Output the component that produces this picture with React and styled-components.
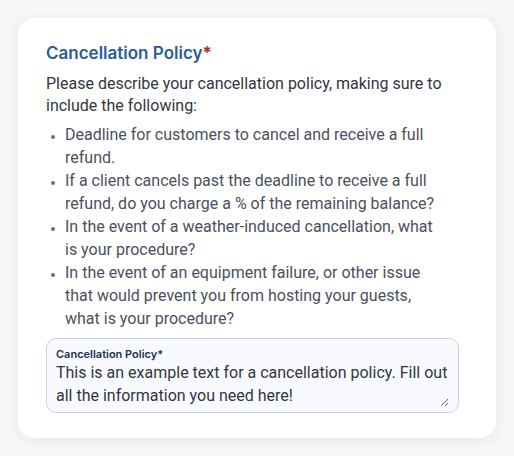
import styled, { createGlobalStyle } from "styled-components";

const GlobalStyle = createGlobalStyle`
  * {
    box-sizing: border-box;
  }

  body {
    margin: 0;
    background-color: #f7f7f8;
    font-family: Roboto, "Liberation Sans", sans-serif;
  }
`;

const requirements = [
  "Deadline for customers to cancel and receive a full refund.",
  "If a client cancels past the deadline to receive a full refund, do you charge a % of the remaining balance?",
  "In the event of a weather-induced cancellation, what is your procedure?",
  "In the event of an equipment failure, or other issue that would prevent you from hosting your guests, what is your procedure?",
];

const App = () => {
  return (
    <>
      <GlobalStyle />
      <Page>
        <Card>
          <Title>
            Cancellation Policy<Required>*</Required>
          </Title>
          <Intro>
            Please describe your cancellation policy, making sure to include
            the following:
          </Intro>
          <List>
            {requirements.map((item) => (
              <li key={item}>{item}</li>
            ))}
          </List>
          <Field>
            <FieldLabel htmlFor="policy">Cancellation Policy*</FieldLabel>
            <TextArea
              id="policy"
              rows={2}
              defaultValue="This is an example text for a cancellation policy. Fill out all the information you need here!"
            />
          </Field>
        </Card>
      </Page>
    </>
  );
};

export default App;

const Page = styled.main`
  padding: 18px;
`;

const Card = styled.section`
  width: 478px;
  padding: 24px 28px 25px;
  background-color: #ffffff;
  border-radius: 16px;
  box-shadow: 0 2px 14px rgba(0, 0, 0, 0.07);
`;

const Title = styled.h2`
  margin: 0 0 9px;
  font-family: Inter, Roboto, sans-serif;
  font-size: 17px;
  line-height: 22px;
  font-weight: 600;
  color: #2a5d9b;
`;

const Required = styled.span`
  color: #b3231f;
`;

const Intro = styled.p`
  max-width: 402px;
  margin: 0 0 6px;
  font-size: 16px;
  line-height: 22px;
  color: #33363f;
`;

const List = styled.ul`
  max-width: 394px;
  margin: 0 0 8px;
  padding-left: 19px;
  font-size: 16px;
  line-height: 23px;
  color: #4b5060;

  li::marker {
    font-size: 12px;
    color: #6b707a;
  }
`;

const Field = styled.div`
  display: flex;
  flex-direction: column;
  width: 413px;
  padding: 8px 9px 5px;
  background-color: #f8fafd;
  border: 1px solid #c9d2e6;
  border-radius: 10px;
`;

const FieldLabel = styled.label`
  font-family: Inter, Roboto, sans-serif;
  font-size: 11px;
  line-height: 14px;
  font-weight: 600;
  color: #1b2f5a;
`;

const TextArea = styled.textarea`
  padding: 0;
  border: none;
  outline: none;
  background: transparent;
  resize: vertical;
  font-family: inherit;
  font-size: 16px;
  line-height: 23px;
  color: #33363f;
`;
